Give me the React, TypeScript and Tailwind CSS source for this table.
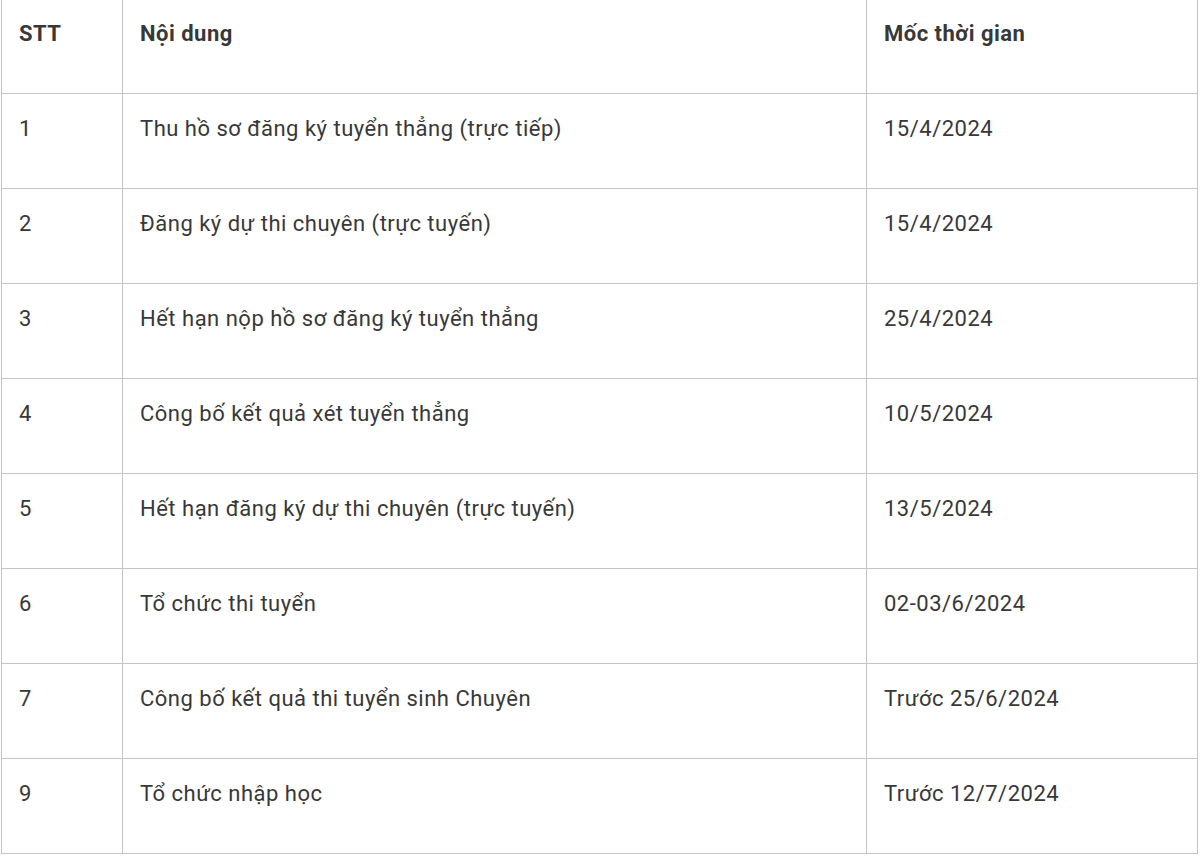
import React from "react";

const rows: [string, string, string][] = [
  ["1", "Thu hồ sơ đăng ký tuyển thẳng (trực tiếp)", "15/4/2024"],
  ["2", "Đăng ký dự thi chuyên (trực tuyến)", "15/4/2024"],
  ["3", "Hết hạn nộp hồ sơ đăng ký tuyển thẳng", "25/4/2024"],
  ["4", "Công bố kết quả xét tuyển thẳng", "10/5/2024"],
  ["5", "Hết hạn đăng ký dự thi chuyên (trực tuyến)", "13/5/2024"],
  ["6", "Tổ chức thi tuyển", "02-03/6/2024"],
  ["7", "Công bố kết quả thi tuyển sinh Chuyên", "Trước 25/6/2024"],
  ["9", "Tổ chức nhập học", "Trước 12/7/2024"],
];

const cell = "border border-[#c4c4c4] align-top text-left pl-[17px] pt-[20px]";

export default function App() {
  return (
    <div className="w-[1200px] h-[861px] bg-white overflow-hidden" style={{ fontFamily: "Roboto, 'Noto Sans', sans-serif" }}>
      <table className="ml-px mt-[-2px] w-[1197px] border-collapse table-fixed text-[22px] leading-[30px] tracking-[0.5px] text-[#383838]">
        <colgroup>
          <col className="w-[121px]" />
          <col className="w-[744px]" />
          <col />
        </colgroup>
        <thead>
          <tr className="h-[95px]">
            <th className={cell + " font-bold"}>STT</th>
            <th className={cell + " font-bold"}>Nội dung</th>
            <th className={cell + " font-bold"}>Mốc thời gian</th>
          </tr>
        </thead>
        <tbody>
          {rows.map((r) => (
            <tr key={r[0]} className="h-[95px]">
              <td className={cell}>{r[0]}</td>
              <td className={cell}>{r[1]}</td>
              <td className={cell}>{r[2]}</td>
            </tr>
          ))}
        </tbody>
      </table>
    </div>
  );
}
